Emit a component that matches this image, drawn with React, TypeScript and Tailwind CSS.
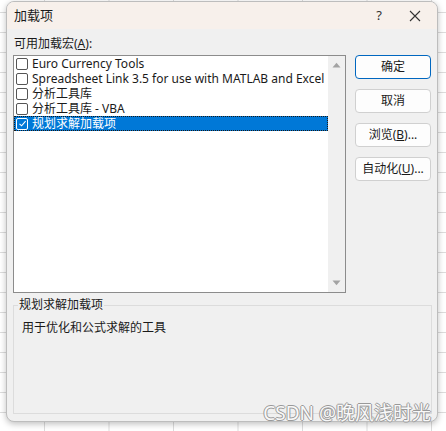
import React from "react";

const FONT = "font-['Segoe_UI','Noto_Sans','Noto_Sans_CJK_SC',sans-serif]";

function Check({ checked, selected }: { checked?: boolean; selected?: boolean }) {
  return (
    <span
      className={`flex h-[12px] w-[12px] shrink-0 items-center justify-center rounded-[2px] border ${
        selected ? "border-white bg-[#0078d7]" : "border-[#555] bg-white"
      }`}
    >
      {checked && (
        <svg width="9" height="9" viewBox="0 0 9 9">
          <path d="M1.5 4.8 L3.6 6.8 L7.6 2.2" fill="none" stroke="white" strokeWidth="1.1" />
        </svg>
      )}
    </span>
  );
}

function Row({ label, checked, selected }: { label: string; checked?: boolean; selected?: boolean }) {
  return (
    <div
      className={`flex h-[15px] items-center gap-[4px] overflow-hidden pl-[2px] text-[12px] leading-[14px] ${
        selected ? "bg-[#0078d7] text-white outline outline-1 outline-dotted outline-[#1a1a1a] -outline-offset-1" : "text-[#1a1a1a]"
      }`}
    >
      <Check checked={checked} selected={selected} />
      <span className="whitespace-nowrap leading-[14px]">{label}</span>
    </div>
  );
}

function Btn({ children, def }: { children: React.ReactNode; def?: boolean }) {
  return (
    <div
      className={`flex h-[24px] w-[76px] items-center justify-center rounded-[4px] border bg-[#fdfdfd] text-[12px] text-[#1a1a1a] ${
        def ? "border-[#0067c0]" : "border-[#d0d0d0]"
      }`}
    >
      {children}
    </div>
  );
}

export default function App() {
  return (
    <div
      className={`relative h-[431px] w-[446px] overflow-hidden bg-white bg-[linear-gradient(to_right,#dcdcdc_1px,transparent_1px),linear-gradient(to_bottom,#dcdcdc_1px,transparent_1px)] bg-[size:64.5px_20px] bg-[position:44px_12px] ${FONT}`}
    >
      <div className="absolute left-[6px] top-[1px] flex h-[421px] w-[432px] flex-col overflow-hidden rounded-[8px] border border-[#bdbdbd] bg-[#f0f0f0] shadow-[0_2px_6px_rgba(0,0,0,0.25)]">
        {/* title bar */}
        <div className="flex h-[27px] shrink-0 items-center bg-[#f7f0eb] pl-[7px] text-[13px] text-[#1a1a1a]">
          <span className="flex-1">加载项</span>
          <span className="w-[20px] text-center text-[13px] text-[#333]">?</span>
          <span className="ml-[16px] mr-[12px] flex w-[20px] items-center justify-center">
            <svg width="12" height="12" viewBox="0 0 12 12">
              <path d="M1 1 L11 11 M11 1 L1 11" stroke="#333" strokeWidth="1.1" />
            </svg>
          </span>
        </div>
        {/* body */}
        <div className="flex flex-1 flex-col px-[6px] pt-[8px]">
          <div className="h-[18px] pl-[1px] text-[12px] leading-[14px] text-[#1a1a1a]">
            可用加载宏(<span className="underline">A</span>):
          </div>
          <div className="flex gap-[9px]">
            <div className="flex h-[238px] w-[333px] border border-[#8c8c8c] bg-white">
              <div className="flex-1">
                <Row label="Euro Currency Tools" />
                <Row label="Spreadsheet Link 3.5 for use with MATLAB and Excel" />
                <Row label="分析工具库" />
                <Row label="分析工具库 - VBA" />
                <Row label="规划求解加载项" checked selected />
              </div>
              <div className="flex w-[17px] flex-col items-center justify-between bg-[#f0f0f0] py-[6px]">
                <svg width="9" height="6" viewBox="0 0 9 6">
                  <path d="M0.5 5.5 L4.5 0.8 L8.5 5.5 Z" fill="#a3a3a3" />
                </svg>
                <svg width="9" height="6" viewBox="0 0 9 6">
                  <path d="M0.5 0.5 L4.5 5.2 L8.5 0.5 Z" fill="#a3a3a3" />
                </svg>
              </div>
            </div>
            <div className="flex flex-col gap-[10px]">
              <Btn def>确定</Btn>
              <Btn>取消</Btn>
              <Btn>
                浏览(<span className="underline">B</span>)...
              </Btn>
              <Btn>
                自动化(<span className="underline">U</span>)...
              </Btn>
            </div>
          </div>
          <div className="relative mt-[12px] h-[109px] w-[419px] border border-[#dcdcdc]">
            <span className="absolute -top-[9px] left-[4px] bg-[#f0f0f0] px-[1px] text-[12px] leading-[16px] text-[#1a1a1a]">
              规划求解加载项
            </span>
            <div className="pl-[8px] pt-[14px] text-[12px] leading-[16px] text-[#1a1a1a]">用于优化和公式求解的工具</div>
          </div>
        </div>
      </div>
      <div className="absolute bottom-[7px] right-[15px] text-[19px] leading-[22px] text-[#f8f8f8] [text-shadow:1px_0_0_#999,-1px_0_0_#999,0_1px_0_#999,0_-1px_0_#999] font-['Noto_Sans','Noto_Sans_CJK_SC',sans-serif]">
        CSDN @晚风浅时光
      </div>
    </div>
  );
}
